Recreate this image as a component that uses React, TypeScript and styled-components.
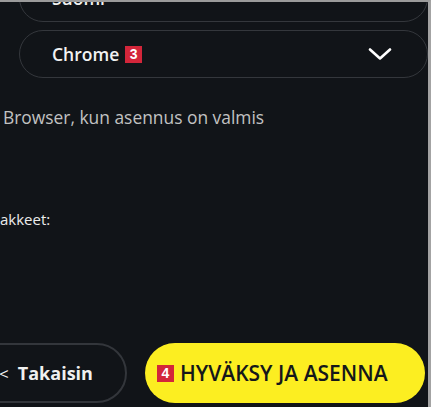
import styled, { createGlobalStyle } from 'styled-components'

const Global = createGlobalStyle`
  html, body {
    margin: 0;
    padding: 0;
    background: #111418;
    overflow: hidden;
  }
  body {
    font-family: "Open Sans", "Noto Sans", sans-serif;
  }
`

const Frame = styled.div`
  width: 431px;
  height: 407px;
  box-sizing: border-box;
  border-top: 2px solid #9b9b9b;
  border-right: 3px solid #a3a3a3;
  background: #111418;
  overflow: hidden;
  display: flex;
  flex-direction: column;
`

const Selects = styled.div`
  display: flex;
  flex-direction: column;
  gap: 8px;
  margin: -28px 0 0 19px;
`

const Select = styled.div`
  height: 48px;
  box-sizing: border-box;
  border: 1px solid #34373c;
  border-radius: 24px;
  display: flex;
  align-items: center;
  justify-content: space-between;
  padding: 0 35px 0 32px;
  color: #f2f2f2;
  font-size: 17.5px;
  font-weight: 600;
`

const Label = styled.span`
  display: flex;
  align-items: center;
  gap: 6px;
`

const Badge = styled.span`
  display: inline-flex;
  align-items: center;
  justify-content: center;
  width: 17px;
  height: 17px;
  background: #d3263a;
  color: #fff;
  font-family: "Liberation Sans", Arial, sans-serif;
  font-size: 14px;
  font-weight: 700;
`

const Hint = styled.div`
  margin: 27px 0 0 3px;
  color: #c2c2c2;
  font-size: 17.4px;
`

const Packages = styled.div`
  margin-top: 80px;
  color: #ececec;
  font-size: 15px;
`

const Actions = styled.div`
  margin-top: auto;
  margin-bottom: 4px;
  display: flex;
  align-items: center;
  gap: 18px;
  margin-left: -35px;
`

const BackButton = styled.div`
  width: 162px;
  height: 60px;
  box-sizing: border-box;
  border: 2px solid #33363b;
  border-radius: 30px;
  display: flex;
  align-items: center;
  justify-content: center;
  gap: 9px;
  color: #f0f0f0;
  font-size: 18px;
  font-weight: 700;
`

const Caret = styled.span`
  font-weight: 400;
  font-size: 17px;
`

const AcceptButton = styled.div`
  width: 280px;
  height: 60px;
  border-radius: 30px;
  background: #fcee21;
  display: flex;
  align-items: center;
  gap: 6px;
  padding-left: 12px;
  box-sizing: border-box;
  color: #15171a;
  font-size: 21px;
  font-weight: 600;
`

const Chevron = ({ size = 24 }: { size?: number }) => (
  <svg width={size} height={size * 0.5} viewBox="0 0 24 12" fill="none">
    <path d="M2 1.5 L12 10.5 L22 1.5" stroke="#ffffff" strokeWidth="2.6" strokeLinecap="round" strokeLinejoin="round" />
  </svg>
)

export default function App() {
  return (
    <>
      <Global />
      <Frame>
        <Selects>
          <Select>
            <Label>Suomi</Label>
            <Chevron size={10} />
          </Select>
          <Select>
            <Label>
              Chrome <Badge>3</Badge>
            </Label>
            <Chevron />
          </Select>
        </Selects>
        <Hint>Browser, kun asennus on valmis</Hint>
        <Packages>akkeet:</Packages>
        <Actions>
          <BackButton>
            <Caret>&lt;</Caret>
            <span>Takaisin</span>
          </BackButton>
          <AcceptButton>
            <Badge>4</Badge>
            HYVÄKSY JA ASENNA
          </AcceptButton>
        </Actions>
      </Frame>
    </>
  )
}
